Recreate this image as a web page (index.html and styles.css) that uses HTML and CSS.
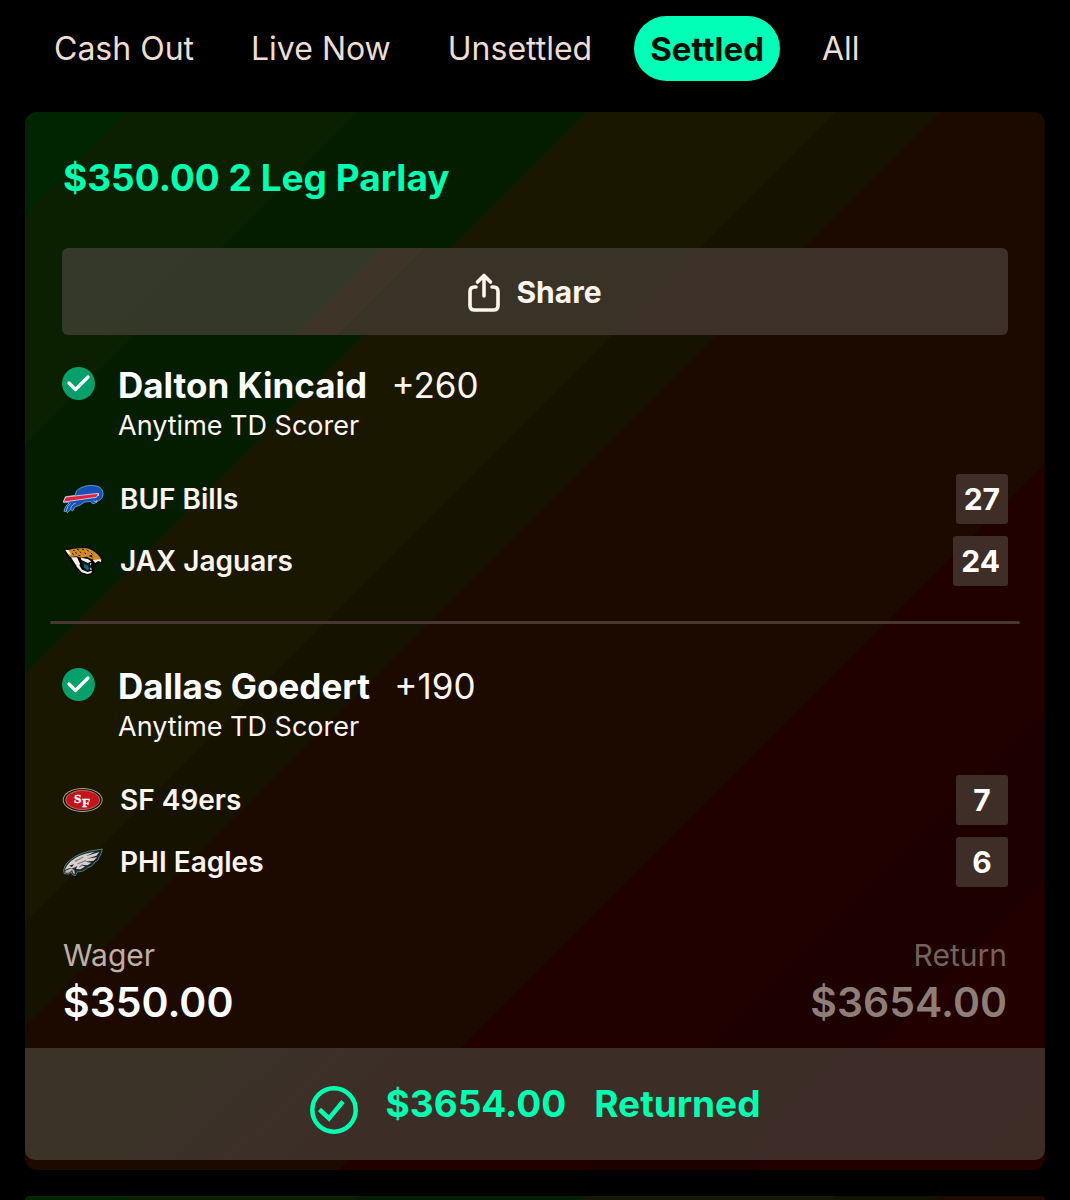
FILE: index.html
```html
<!DOCTYPE html>
<html lang="en">
<head>
<meta charset="utf-8">
<meta name="viewport" content="width=device-width, initial-scale=1">
<title>My Bets</title>
<link rel="stylesheet" href="styles.css">
</head>
<body>
<nav class="tabs" aria-label="Bet filters">
  <button class="tab" type="button">Cash Out</button>
  <button class="tab" type="button">Live Now</button>
  <button class="tab" type="button">Unsettled</button>
  <button class="tab tab-active" type="button" aria-current="true">Settled</button>
  <button class="tab" type="button">All</button>
</nav>
<main class="bets">
  <article class="card">
    <div class="card-body">
      <h1 class="title">$350.00 2 Leg Parlay</h1>
      <button class="share" type="button">
        <svg class="share-icon" viewBox="0 0 32 40" aria-hidden="true"><path d="M8 15H6.500Q2 15 2 19.500V33.500Q2 38 6.500 38H25.500Q30 38 30 33.500V19.500Q30 15 25.500 15H24M16 24V4M9.500 10L16 3.500L22.500 10" fill="none" stroke="currentColor" stroke-width="3.600" stroke-linecap="round" stroke-linejoin="round"/></svg>
        Share
      </button>

      <section class="leg">
        <svg class="won" viewBox="0 0 33 33" aria-hidden="true"><circle cx="16.500" cy="16.500" r="16.500" fill="#07a06a"/><path d="M7 16L13.500 22.500L26 10" fill="none" stroke="#fff" stroke-width="3.200" stroke-linecap="round" stroke-linejoin="round"/></svg>
        <div class="pick">
          <h2 class="player">Dalton Kincaid <span class="odds">+260</span></h2>
          <p class="market">Anytime TD Scorer</p>
        </div>
      </section>
      <ul class="teams">
        <li class="team">
          <svg class="logo" viewBox="34 42 126 90" aria-hidden="true">
            <path d="M78 62C92 50 112 44 132 47C150 49 158 60 157 73C156 88 145 91 137 97C131 101 128 102 123 99L120 94C111 96 102 94 96 100C88 108 80 106 72 112L66 123L60 119L50 128L47 124L40 124C42 112 48 104 56 98L38 97L44 80L73 76Z" fill="#1552b8" stroke="#9fc4ea" stroke-width="2" stroke-linejoin="round"/>
            <path d="M38 96L45 81L144 70L137 82Z" fill="#e1203c" stroke="#fff" stroke-width="2"/>
            <path d="M60 100Q50 106 47 123M75 99Q61 105 60 118M128 92L137 96L139 90" fill="none" stroke="#c5dcf5" stroke-width="2"/>
            <circle cx="143" cy="75" r="2.500" fill="#fff"/>
          </svg>
          <span class="team-name">BUF Bills</span><span class="score">27</span>
        </li>
        <li class="team">
          <svg class="logo" viewBox="34 229 126 90" aria-hidden="true">
            <path d="M39 237L60 235L104 231C127 235 148 249 157 270L151 280L137 284L132 296L130 310L119 318L102 315L80 303L65 283L51 261L43 252Z" fill="#0a0806"/>
            <path d="M44 241L57 240L67 237L104 235C123 238 139 249 151 267L145 274L128 270L117 266L108 261L91 264L77 260L58 262L48 248Z" fill="#cf8b24"/>
            <path d="M44 240L54 242L62 255L53 254ZM61 263L79 263L88 282L84 294L74 284ZM91 264L111 268L122 275L112 280L92 271ZM126 271L152 269L151 277L142 274L134 280ZM80 277L94 300L111 307L124 303L122 310L110 313L93 308L77 290Z" fill="#f6f2e8"/>
            <path d="M92 274L116 283L120 300L110 303L97 292Z" fill="#0b2226"/>
            <path d="M100 284L110 287L116 297L110 302L101 293Z" fill="#0b6f7c"/>
            <path d="M118 281L122 280L120 289ZM118 299L121 292L123 302Z" fill="#fff"/>
            <path d="M68 242l3 1M80 239l4 2M95 239l4 1M109 241l4 3M75 249l3 2M88 247l3 2M102 250l3 2M65 252l4 2M121 250l4 4M84 257l4 1" fill="none" stroke="#261505" stroke-width="3" stroke-linecap="round"/>
            <path d="M114 259l13 5-5-9z" fill="#0a0806"/>
          </svg>
          <span class="team-name">JAX Jaguars</span><span class="score">24</span>
        </li>
      </ul>

      <hr class="divider">

      <section class="leg">
        <svg class="won" viewBox="0 0 33 33" aria-hidden="true"><circle cx="16.500" cy="16.500" r="16.500" fill="#07a06a"/><path d="M7 16L13.500 22.500L26 10" fill="none" stroke="#fff" stroke-width="3.200" stroke-linecap="round" stroke-linejoin="round"/></svg>
        <div class="pick">
          <h2 class="player">Dallas Goedert <span class="odds">+190</span></h2>
          <p class="market">Anytime TD Scorer</p>
        </div>
      </section>
      <ul class="teams">
        <li class="team">
          <svg class="logo" viewBox="34 30 126 90" aria-hidden="true">
            <ellipse cx="96" cy="75" rx="60" ry="36" fill="#b9a580"/>
            <ellipse cx="96" cy="75" rx="57" ry="33" fill="#190b08"/>
            <ellipse cx="96" cy="75" rx="51" ry="29" fill="#c3141b" stroke="#e7c9b2" stroke-width="1.500"/>
            <g class="monogram"><text x="70" y="83">S</text><text x="94" y="97">F</text></g>
          </svg>
          <span class="team-name">SF 49ers</span><span class="score">7</span>
        </li>
        <li class="team">
          <svg class="logo" viewBox="34 217 126 90" aria-hidden="true">
            <path d="M39 287C42 272 49 263 62 254C75 242 94 236 113 230L155 223C152 235 151 241 145 247C145 255 139 260 133 262C128 272 120 277 111 279C101 289 91 292 80 291L74 303L65 300L62 292L54 298L41 297Z" fill="#17272b" stroke="#7caaa9" stroke-width="2" stroke-linejoin="round"/>
            <path d="M43 286C48 270 60 260 73 251C91 239 112 234 133 231L105 245L146 232L137 243L108 252L139 248L129 258L102 261L122 264L110 272L91 270L103 276L89 284L76 283L80 274L67 281L55 281Z" fill="#d7d0cf"/>
            <path d="M44 288L62 281L71 287L73 298L67 296L65 287L54 294L44 294Z" fill="#c1b7ae"/>
            <path d="M73 260L98 247M80 268L106 257M86 277L97 270" stroke="#8b8383" stroke-width="4"/>
            <path d="M55 273l15-4-6 8z" fill="#10191b"/>
          </svg>
          <span class="team-name">PHI Eagles</span><span class="score">6</span>
        </li>
      </ul>

      <dl class="amounts">
        <div class="amount"><dt class="amount-label">Wager</dt><dd class="amount-value">$350.00</dd></div>
        <div class="amount amount-return"><dt class="amount-label">Return</dt><dd class="amount-value">$3654.00</dd></div>
      </dl>
    </div>
    <footer class="result">
      <svg class="result-icon" viewBox="0 0 48 48" aria-hidden="true"><circle cx="24" cy="24" r="21.700" fill="none" stroke="currentColor" stroke-width="4.500"/><path d="M9.500 23.500L19 32.500L33 15.500" fill="none" stroke="currentColor" stroke-width="4.500"/></svg>
      <p class="result-text"><span>$3654.00</span><span>Returned</span></p>
    </footer>
  </article>
  <article class="card card-next" aria-label="Next bet"></article>
</main>
</body>
</html>
```
FILE: styles.css
```css
* { box-sizing: border-box; }

body {
  margin: 0;
  padding: 16px 25px 0;
  background: #000;
  color: #fff5ee;
  font-family: Inter, "Liberation Sans", sans-serif;
}

h1, h2, p, ul, dl, dd { margin: 0; padding: 0; }
button { border: 0; font-family: inherit; color: inherit; cursor: pointer; }

.tabs {
  display: flex;
  gap: 27px;
  padding: 0 14px;
}
.tab {
  height: 65px;
  padding: 0 15px;
  border-radius: 33px;
  background: none;
  color: #eeddd2;
  font-size: 32px;
  line-height: 64px;
  white-space: nowrap;
}
.tab-active {
  padding: 0 16px;
  background: #00ffb7;
  color: #051008;
  font-size: 33px;
  font-weight: 700;
  line-height: 62px;
}

.bets {
  display: flex;
  flex-direction: column;
  gap: 26px;
  margin-top: 31px;
}
.card {
  padding-bottom: 10px;
  border-radius: 12px;
  background: linear-gradient(135deg,
    #002500 5%, #0a2000 5% 16%, #041c00 16% 27%,
    #1a1700 27% 39%, #161200 39% 44%,
    #1c0a00 44% 66%, #210000 66% 78%,
    #1d0000 78% 86%, #230000 86%) 0 0 / 100% 1058px;
  overflow: hidden;
}
.card-next {
  height: 4px;
  padding: 0;
  border-radius: 12px 12px 0 0;
}
.card-body { padding: 40px 37px 19px; }

.title {
  margin-left: 1px;
  color: #00ffb0;
  font-size: 37px;
  font-weight: 700;
  line-height: 52px;
}
.share {
  display: flex;
  align-items: center;
  justify-content: center;
  gap: 16px;
  width: 100%;
  height: 87px;
  margin-top: 44px;
  border-radius: 6px;
  background: linear-gradient(135deg,
    #343929 13%, #333828 13% 31%, #3e3528 31% 35%,
    #393327 35% 62%, #3c3028 62%);
  font-size: 30px;
  font-weight: 700;
}
.share-icon { width: 32px; height: 40px; }

.leg {
  display: flex;
  gap: 23px;
  margin-top: 28px;
}
.won {
  width: 33px;
  height: 33px;
  margin-top: 4px;
}
.player {
  font-size: 35px;
  font-weight: 700;
  line-height: 44px;
  color: #fff;
}
.odds {
  margin-left: 16px;
  font-weight: 400;
  color: #fff5ee;
}
.market {
  font-size: 27px;
  line-height: 38px;
}
.teams {
  display: grid;
  gap: 12px;
  margin-top: 29px;
  list-style: none;
}
.team {
  display: flex;
  align-items: center;
  height: 50px;
}
.logo {
  width: 42px;
  height: 30px;
  margin-right: 16px;
}
.monogram {
  fill: #fff;
  stroke: #fff;
  stroke-width: 1px;
  font: bold 40px "Liberation Serif", serif;
}
.team-name {
  font-size: 28px;
  font-weight: 600;
}
.score {
  height: 50px;
  min-width: 52px;
  margin-left: auto;
  padding: 0 8px;
  border-radius: 3px;
  background: #3f2d27;
  color: #fff;
  font-size: 30px;
  font-weight: 700;
  line-height: 50px;
  text-align: center;
}
.divider {
  height: 3px;
  margin: 35px -12px 0;
  border: 0;
  border-radius: 2px;
  background: #483630;
}
.divider + .leg { margin-top: 40px; }

.amounts {
  display: flex;
  justify-content: space-between;
  margin: 48px 1px 0;
}
.amount-label {
  color: #c0afa5;
  font-size: 30px;
  line-height: 40px;
}
.amount-value {
  color: #fff;
  font-size: 41px;
  font-weight: 600;
  line-height: 54px;
}
.amount-return { text-align: right; }
.amount-return .amount-label { color: #76625b; }
.amount-return .amount-value { color: #8f7d77; }

.result {
  display: flex;
  align-items: center;
  justify-content: center;
  gap: 28px;
  height: 112px;
  padding-top: 12px;
  border-radius: 0 0 10px 10px;
  background: linear-gradient(135deg, #3b3228 16%, #3c2e27 36%, #3e2c27);
  color: #00ffb0;
}
.result-icon { width: 48px; height: 48px; }
.result-text {
  display: flex;
  gap: 28px;
  padding-bottom: 14px;
  font-size: 37px;
  font-weight: 700;
}
```
